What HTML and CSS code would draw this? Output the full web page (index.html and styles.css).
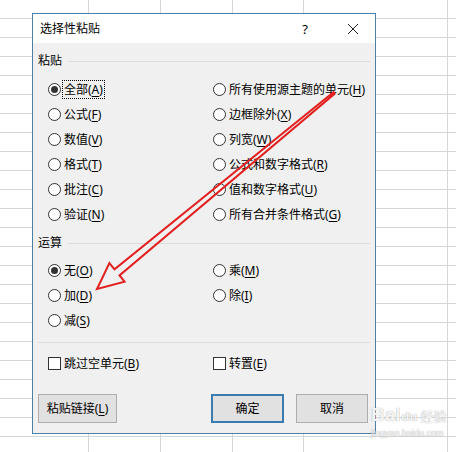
FILE: index.html
```html
<!DOCTYPE html>
<html lang="zh-CN">
<head>
<meta charset="utf-8">
<title>选择性粘贴</title>
<link rel="stylesheet" href="styles.css">
</head>
<body>
<div class="dialog">
  <div class="titlebar">
    <span class="title">选择性粘贴</span>
    <span class="help">?</span>
    <span class="close"><svg width="12" height="12" viewBox="0 0 12 12"><path d="M1 1L11 11M11 1L1 11" stroke="#222" stroke-width="1" fill="none"/></svg></span>
  </div>
  <div class="content">
    <div class="group-label"><span>粘贴</span></div>
    <div class="options six">
      <label class="opt"><span class="radio checked"></span><span class="txt focus">全部(<u>A</u>)</span></label>
      <label class="opt"><span class="radio"></span><span class="txt">所有使用源主题的单元(<u>H</u>)</span></label>
      <label class="opt"><span class="radio"></span><span class="txt">公式(<u>F</u>)</span></label>
      <label class="opt"><span class="radio"></span><span class="txt">边框除外(<u>X</u>)</span></label>
      <label class="opt"><span class="radio"></span><span class="txt">数值(<u>V</u>)</span></label>
      <label class="opt"><span class="radio"></span><span class="txt">列宽(<u>W</u>)</span></label>
      <label class="opt"><span class="radio"></span><span class="txt">格式(<u>T</u>)</span></label>
      <label class="opt"><span class="radio"></span><span class="txt">公式和数字格式(<u>R</u>)</span></label>
      <label class="opt"><span class="radio"></span><span class="txt">批注(<u>C</u>)</span></label>
      <label class="opt"><span class="radio"></span><span class="txt">值和数字格式(<u>U</u>)</span></label>
      <label class="opt"><span class="radio"></span><span class="txt">验证(<u>N</u>)</span></label>
      <label class="opt"><span class="radio"></span><span class="txt">所有合并条件格式(<u>G</u>)</span></label>
    </div>
    <div class="group-label second"><span>运算</span></div>
    <div class="options three">
      <label class="opt"><span class="radio checked"></span><span class="txt">无(<u>O</u>)</span></label>
      <label class="opt"><span class="radio"></span><span class="txt">乘(<u>M</u>)</span></label>
      <label class="opt"><span class="radio"></span><span class="txt">加(<u>D</u>)</span></label>
      <label class="opt"><span class="radio"></span><span class="txt">除(<u>I</u>)</span></label>
      <label class="opt"><span class="radio"></span><span class="txt">减(<u>S</u>)</span></label>
    </div>
    <div class="separator"></div>
    <div class="options checks">
      <label class="opt"><span class="check"></span><span class="txt">跳过空单元(<u>B</u>)</span></label>
      <label class="opt"><span class="check"></span><span class="txt">转置(<u>E</u>)</span></label>
    </div>
    <div class="buttons">
      <span class="btn link">粘贴链接(<u>L</u>)</span>
      <span class="btn ok">确定</span>
      <span class="btn cancel">取消</span>
    </div>
  </div>
</div>
<svg class="arrow" width="456" height="452" viewBox="0 0 456 452">
  <polygon points="333.4,92.2 114.5,269.3 109.4,263.1 97,289 124.6,281.7 119.5,275.5 334.6,93.8" fill="none" stroke="#e2201f" stroke-width="2" stroke-linejoin="miter"/>
</svg>
<div class="watermark">
  <div class="wm-top"><span class="wm-bai">Bai</span><span class="wm-paw">du</span><span class="wm-jy">经验</span></div>
  <div class="wm-url">jingyan.baidu.com</div>
</div>
</body>
</html>
```
FILE: styles.css
```css
html, body {
  margin: 0;
  padding: 0;
}
body {
  width: 456px;
  height: 452px;
  overflow: hidden;
  position: relative;
  font-family: "Noto Sans", "Noto Sans CJK SC", sans-serif;
  font-size: 12px;
  color: #000;
  background-color: #fff;
  background-image:
    linear-gradient(to right,
      transparent 88px, #d6d6d6 88px, #d6d6d6 89px, transparent 89px,
      transparent 160px, #d6d6d6 160px, #d6d6d6 161px, transparent 161px,
      transparent 232px, #d6d6d6 232px, #d6d6d6 233px, transparent 233px,
      transparent 303px, #d6d6d6 303px, #d6d6d6 304px, transparent 304px,
      transparent 447px, #d6d6d6 447px, #d6d6d6 448px, transparent 448px),
    linear-gradient(to bottom, #d6d6d6 1px, transparent 1px);
  background-size: 456px 452px, 456px 19px;
  background-position: 0 0, 0 18px;
  background-repeat: no-repeat, repeat;
}
.dialog {
  margin: 13px 0 0 32px;
  width: 342px;
  height: 419px;
  border: 1px solid #4a80a8;
  background: #f0f0f0;
  display: flex;
  flex-direction: column;
}
.titlebar {
  height: 29px;
  background: #fff;
  display: flex;
  align-items: center;
  flex-shrink: 0;
}
.title {
  margin-left: 7px;
  line-height: 16px;
}
.help {
  margin-left: auto;
  width: 50px;
  text-align: center;
  line-height: 16px;
  font-size: 13px;
}
.close {
  width: 45px;
  height: 29px;
  display: flex;
  align-items: center;
  justify-content: center;
}
.content {
  padding: 10px 5px 0 5px;
  display: flex;
  flex-direction: column;
}
.group-label {
  display: flex;
  align-items: center;
  height: 16px;
  line-height: 16px;
}
.group-label::after {
  content: "";
  flex: 1;
  height: 1px;
  background: #dcdcdc;
  margin-left: 6px;
}
.group-label.second {
  margin-top: 8px;
}
.options {
  display: grid;
  grid-template-columns: 165px auto;
  grid-auto-rows: 25px;
  padding-left: 10px;
}
.options.six { margin-top: 8px; }
.options.three { margin-top: 7px; }
.options.checks { margin-top: 8px; }
.opt {
  display: flex;
  align-items: center;
}
.radio, .check {
  width: 13px;
  height: 13px;
  box-sizing: border-box;
  border: 1px solid #333;
  background: #fff;
  margin-right: 1px;
  flex-shrink: 0;
  display: flex;
  align-items: center;
  justify-content: center;
}
.radio {
  border-radius: 50%;
}
.radio.checked::after {
  content: "";
  width: 7px;
  height: 7px;
  border-radius: 50%;
  background: #333;
}
.txt {
  padding: 1px 2px 1px 2px;
  line-height: 17px;
  white-space: nowrap;
}
.txt.focus {
  outline: 1px dotted #000;
  outline-offset: -1px;
}
u {
  text-decoration: underline;
  text-underline-offset: 2px;
}
.separator {
  margin-top: 9px;
  height: 1px;
  background: #dcdcdc;
}
.buttons {
  margin-top: 18px;
  display: flex;
  padding-right: 2px;
  gap: 12px;
}
.btn {
  height: 29px;
  box-sizing: border-box;
  border: 1px solid #adadad;
  background: #e1e1e1;
  display: flex;
  align-items: center;
  justify-content: center;
  line-height: 16px;
}
.btn.link { width: 79px; }
.btn.ok {
  width: 73px;
  margin-left: auto;
  border: 2px solid #3a7bb0;
}
.btn.cancel { width: 72px; }
.arrow {
  position: absolute;
  left: 0;
  top: 0;
  pointer-events: none;
}
.watermark {
  position: absolute;
  left: 371px;
  top: 404px;
  color: rgba(255, 255, 255, 0.9);
  text-shadow: 0 0 1px rgba(150, 150, 150, 0.6), 0 0 1px rgba(150, 150, 150, 0.6);
  pointer-events: none;
}
.wm-top {
  display: flex;
  align-items: baseline;
  line-height: 22px;
}
.wm-bai {
  font-family: "Liberation Sans", sans-serif;
  font-weight: bold;
  font-size: 19px;
}
.wm-paw {
  font-family: "Liberation Sans", sans-serif;
  font-weight: bold;
  font-size: 13px;
  margin-left: 1px;
}
.wm-jy {
  font-family: "Noto Sans CJK SC", sans-serif;
  font-size: 13px;
  margin-left: 3px;
}
.wm-url {
  font-family: "Liberation Sans", sans-serif;
  font-size: 9px;
  line-height: 11px;
}
```
